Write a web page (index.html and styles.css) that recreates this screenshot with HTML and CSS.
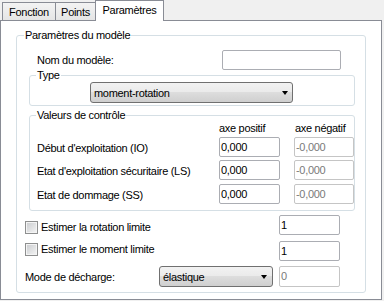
FILE: index.html
```html
<!DOCTYPE html>
<html>
<head>
<meta charset="utf-8">
<link rel="stylesheet" href="styles.css">
</head>
<body>
<div class="tabs">
  <div class="tab t-fonction">Fonction</div>
  <div class="tab t-points">Points</div>
  <div class="tab t-params active">Paramètres</div>
</div>
<div class="panel">
  <div class="group outer">
    <div class="legend">Paramètres du modèle</div>
    <div class="name-row">
      <span class="lbl">Nom du modèle:</span>
      <span class="input name-input"></span>
    </div>
    <div class="group type-group">
      <div class="legend">Type</div>
      <div class="combo type-combo"><span class="combo-text">moment-rotation</span><i class="arrow"></i></div>
    </div>
    <div class="group values-group">
      <div class="legend">Valeurs de contrôle</div>
      <div class="vgrid">
        <span></span><span class="hdr">axe positif</span><span class="hdr hdr2">axe négatif</span>
        <span class="vlbl">Début d'exploitation (IO)</span><span class="input val">0,000</span><span class="input val dis">-0,000</span>
        <span class="vlbl">Etat d'exploitation sécuritaire (LS)</span><span class="input val">0,000</span><span class="input val dis">-0,000</span>
        <span class="vlbl">Etat de dommage (SS)</span><span class="input val">0,000</span><span class="input val dis">-0,000</span>
      </div>
    </div>
    <div class="crow crow1">
      <span class="chk"><i class="box"></i><span class="chk-text">Estimer la rotation limite</span></span>
      <span class="input num">1</span>
    </div>
    <div class="crow crow2">
      <span class="chk"><i class="box"></i><span class="chk-text">Estimer le moment limite</span></span>
      <span class="input num">1</span>
    </div>
    <div class="crow crow3">
      <span class="mode-lbl">Mode de décharge:</span>
      <div class="combo mode-combo"><span class="combo-text">élastique</span><i class="arrow"></i></div>
      <span class="input num dis zero">0</span>
    </div>
  </div>
</div>
</body>
</html>
```

FILE: styles.css
```css
* { box-sizing: border-box; }
html, body { margin: 0; padding: 0; }
body {
  width: 384px;
  height: 301px;
  overflow: hidden;
  background: #f0f0f0;
  font-family: "Liberation Sans", Arial, sans-serif;
  font-size: 11px;
  letter-spacing: -0.3px;
  color: #000;
}

/* tabs */
.tabs {
  display: flex;
  align-items: flex-end;
  height: 20px;
  padding-left: 2px;
}
.tab {
  height: 18px;
  border: 1px solid #898c95;
  border-bottom: 0;
  background: linear-gradient(#f3f3f3, #e5e5e5);
  text-align: center;
  line-height: 19px;
  white-space: nowrap;
}
.t-fonction { width: 54px; }
.t-points { width: 41px; margin-left: -1px; }
.t-params { width: 69px; margin-left: -1px; }
.tab.active {
  position: relative;
  z-index: 1;
  height: 21px;
  margin-bottom: -1px;
  background: #fff;
  line-height: 18px;
}

/* panel */
.panel {
  width: 382px;
  height: 280px;
  border: 1px solid #898c95;
  background: #fff;
  padding: 14px 0 0 15px;
}

.group {
  border: 1px solid #d5dfe5;
  border-radius: 3px;
}
.outer {
  width: 350px;
  height: 258px;
}
.legend {
  width: fit-content;
  height: 14px;
  line-height: 14px;
  margin-top: -8px;
  margin-left: 7px;
  padding: 0 1px;
  background: #fff;
  white-space: nowrap;
}
.outer > .legend { margin-left: 7px; }
.type-group > .legend,
.values-group > .legend { margin-left: 6px; }

/* inputs */
.input {
  display: block;
  height: 20px;
  border: 1px solid #abadb3;
  border-radius: 2px;
  background: #fff;
  line-height: 18px;
  padding-left: 1px;
  white-space: nowrap;
}
.input.dis {
  border-color: #c5c5c5;
  color: #7a7a7a;
}

.name-row {
  display: flex;
  align-items: center;
  height: 20px;
  margin-top: 8px;
  padding-left: 20px;
  padding-right: 24px;
}
.name-input {
  width: 119px;
  margin-left: auto;
}

/* combo */
.combo {
  display: flex;
  align-items: center;
  height: 21px;
  border: 1px solid #707070;
  border-radius: 3px;
  background: linear-gradient(#f2f2f2 0%, #ebebeb 45%, #dddddd 50%, #cfcfcf 100%);
  padding: 0 4px 0 3px;
  white-space: nowrap;
}
.combo-text { flex: 1; }
.arrow {
  width: 0;
  height: 0;
  border-left: 3.5px solid transparent;
  border-right: 3.5px solid transparent;
  border-top: 4px solid #000;
}

.type-group {
  width: 326px;
  height: 31px;
  margin: 5px 0 0 12px;
}
.type-combo {
  width: 203px;
  margin-left: 60px;
}

/* values */
.values-group {
  width: 326px;
  height: 96px;
  margin: 9px 0 0 12px;
}
.vgrid {
  display: grid;
  grid-template-columns: 168px 61px 60px;
  column-gap: 14px;
  grid-template-rows: 15px 23px 24px 20px;
  align-items: start;
  padding-left: 7px;
}
.hdr {
  line-height: 12px;
  white-space: nowrap;
}
.hdr2 { padding-left: 1px; }
.vlbl {
  line-height: 20px;
  padding-top: 1px;
  white-space: nowrap;
}
.val { height: 20px; }

/* check rows */
.crow {
  display: flex;
  align-items: flex-start;
  padding-right: 25px;
}
.crow1 { margin-top: 4px; }
.crow2 { margin-top: 6px; }
.crow3 { margin-top: 5px; align-items: center; }
.chk {
  display: flex;
  align-items: center;
  margin-left: 8px;
  white-space: nowrap;
}
.crow1 .chk { margin-top: 6px; }
.crow2 .chk { margin-top: 2px; }
.box {
  display: block;
  width: 13px;
  height: 13px;
  border: 1px solid #8e8f8f;
  box-shadow: inset 0 0 0 1px #f4f4f4;
  background: linear-gradient(135deg, #c9cbce, #f5f5f5);
  margin-right: 3px;
}
.chk-text { line-height: 13px; }
.num {
  width: 61px;
  margin-left: auto;
}
.crow3 .num { height: 21px; margin-left: 6px; }
.mode-lbl {
  width: 134px;
  margin-left: 8px;
  white-space: nowrap;
}
.mode-combo {
  width: 114px;
  padding-right: 5px;
}
.zero { color: #c8a070; }
```
